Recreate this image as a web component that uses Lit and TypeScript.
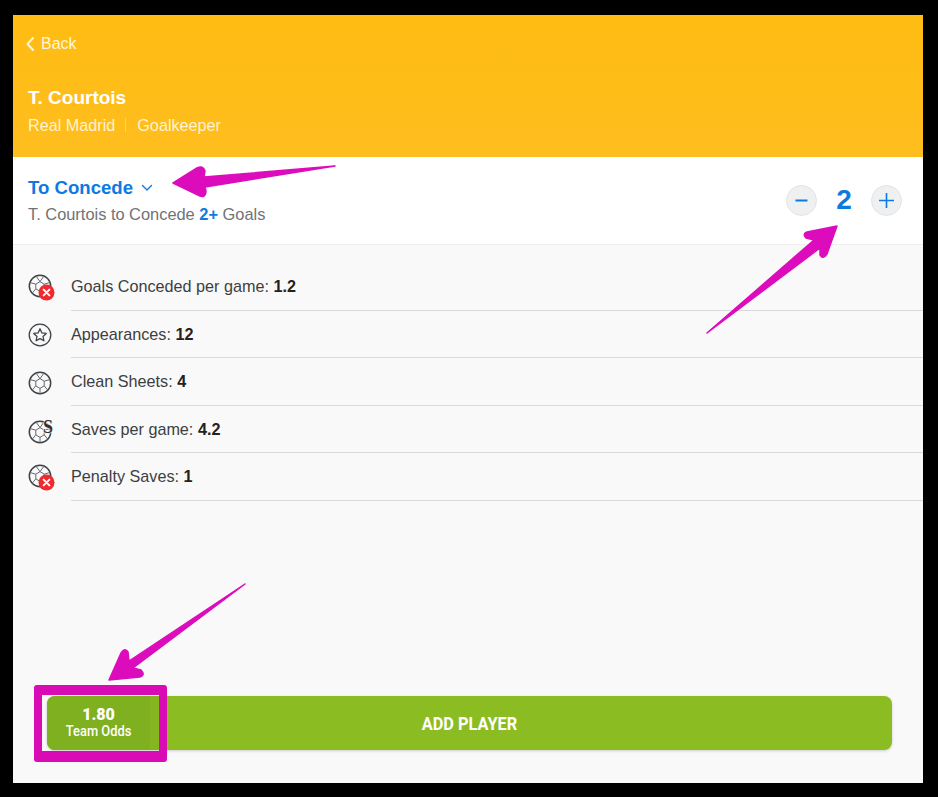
import { LitElement, html, css, svg } from "lit";
import { customElement } from "lit/decorators.js";

const ball = svg`
  <circle cx="12" cy="12" r="10.7" fill="none" stroke="#3f4347" stroke-width="1.5"/>
  <path d="M12 7.6l4.2 2.6v4.6L12 17.4l-4.2-2.6v-4.6zM12 7.6L8.4 2.6M12 7.6l3.6-5M16.2 10.2l5.4-1.6M16.2 14.8l3.6 4.4M12 17.4v5M7.8 14.8l-3.6 4.4M7.8 10.2L2.4 8.6" fill="none" stroke="#65696d" stroke-width="1"/>
`;
const cross = svg`
  <circle cx="18.5" cy="18.5" r="8" fill="#ee2a30"/>
  <path d="M15.6 15.6l5.8 5.8M21.4 15.6l-5.8 5.8" stroke="#fff" stroke-width="2" stroke-linecap="round"/>
`;
const icons: Record<string, unknown> = {
  conceded: html`<svg viewBox="0 0 27 27" width="27" height="27">${ball}${cross}</svg>`,
  star: html`<svg viewBox="0 0 24 24" width="24" height="24">
    <circle cx="12" cy="12" r="10.8" fill="none" stroke="#3f4347" stroke-width="1.3"/>
    <path d="M12 5.8l1.9 4.1 4.4.5-3.3 3 .9 4.4-3.9-2.2-3.9 2.2.9-4.4-3.3-3 4.4-.5z" fill="none" stroke="#3f4347" stroke-width="1.3" stroke-linejoin="round"/>
  </svg>`,
  ball: html`<svg viewBox="0 0 24 24" width="24" height="24">${ball}</svg>`,
  saves: html`<svg viewBox="0 0 27 27" width="27" height="27">
    <g transform="translate(0 3)">${ball}</g>
    <text x="15" y="15.5" class="dollar">S</text>
  </svg>`,
};

const rows = [
  { icon: "conceded", label: "Goals Conceded per game:", value: "1.2" },
  { icon: "star", label: "Appearances:", value: "12" },
  { icon: "ball", label: "Clean Sheets:", value: "4" },
  { icon: "saves", label: "Saves per game:", value: "4.2" },
  { icon: "conceded", label: "Penalty Saves:", value: "1" },
];

@customElement("app-root")
export class AppRoot extends LitElement {
  static styles = css`
    :host {
      display: block;
      width: 938px;
      height: 797px;
      background: #000;
      position: relative;
      overflow: hidden;
      font-family: "Liberation Sans", Arial, sans-serif;
      padding: 15px 15px 14px 13px;
      box-sizing: border-box;
    }
    .panel {
      height: 100%;
      background: #f9f9f9;
      display: flex;
      flex-direction: column;
    }
    .header {
      height: 142px;
      box-sizing: border-box;
      flex: none;
      background: linear-gradient(#ffbc12, #febe1e);
      color: #fff;
      padding: 19px 15px 0 15px;
      display: flex;
      flex-direction: column;
    }
    .back {
      display: flex;
      align-items: center;
      gap: 6px;
      font-size: 16px;
      line-height: 20px;
      color: #fff6dc;
      margin-left: -3px;
    }
    .name {
      margin-top: 32px;
      font-size: 19px;
      line-height: 24px;
      font-weight: 700;
    }
    .meta {
      margin-top: 5px;
      display: flex;
      align-items: center;
      font-size: 16.2px;
      line-height: 20px;
      color: #fff3d0;
    }
    .sep {
      width: 1px;
      height: 14px;
      margin: 0 11px 0 10px;
      background: #ffd264;
    }
    .market {
      height: 88px;
      box-sizing: border-box;
      flex: none;
      background: #fff;
      border-bottom: 1px solid #eeeeee;
      display: flex;
      align-items: center;
      justify-content: space-between;
      padding: 0 21px 0 15px;
    }
    .title {
      display: flex;
      align-items: center;
      gap: 8px;
      font-size: 18.6px;
      line-height: 22px;
      font-weight: 700;
      color: #0d7ae0;
    }
    .desc {
      margin-top: 5px;
      font-size: 16.4px;
      line-height: 20px;
      color: #6f7376;
    }
    .desc b {
      color: #0d7ae0;
    }
    .stepper {
      display: flex;
      align-items: center;
      margin-top: -1px;
    }
    .step {
      width: 31px;
      height: 31px;
      box-sizing: border-box;
      border-radius: 50%;
      background: #eff0f1;
      border: 1px solid #e2e3e4;
      display: flex;
      align-items: center;
      justify-content: center;
    }
    .count {
      width: 54px;
      text-align: center;
      font-size: 28px;
      line-height: 30px;
      font-weight: 700;
      color: #0d7ae0;
    }
    .list {
      padding-top: 18px;
    }
    .row {
      display: flex;
      align-items: center;
      height: 47.5px;
    }
    .icon {
      width: 58px;
      flex: none;
      box-sizing: border-box;
      padding-left: 15px;
      display: flex;
      align-items: center;
      height: 100%;
      padding-top: 2px;
    }
    .dollar {
      font-family: "Liberation Serif", serif;
      font-weight: 700;
      font-size: 18px;
      fill: #2e3134;
      stroke: #f9f9f9;
      stroke-width: 1.2px;
      paint-order: stroke;
    }
    .text {
      flex: 1;
      height: 100%;
      box-sizing: border-box;
      border-bottom: 1px solid #d9d9d9;
      padding-top: 0.5px;
      display: flex;
      align-items: center;
      gap: 4.5px;
      font-size: 16.2px;
      color: #3c3f42;
    }
    .text b {
      color: #222;
    }
    .footer {
      margin-top: auto;
      padding: 0 31px 33px 34px;
    }
    .cta {
      height: 54px;
      border-radius: 8px;
      background: #8bbc21;
      box-shadow: 0 1px 3px rgba(0, 0, 0, 0.18);
      display: flex;
      align-items: stretch;
      color: #fff;
      font-family: Roboto, sans-serif;
      font-weight: 700;
      overflow: hidden;
    }
    .odds {
      width: 103px;
      flex: none;
      background: #7fb020;
      border-right: 9px solid #85b61f;
      display: flex;
      flex-direction: column;
      align-items: center;
      gap: 2px;
      justify-content: center;
      box-sizing: content-box;
    }
    .odds-value {
      font-size: 16px;
      line-height: 15px;
      font-weight: 900;
    }
    .odds-label {
      font-size: 14px;
      line-height: 15px;
      font-weight: 500;
      transform: scaleX(0.92);
      white-space: nowrap;
    }
    .add {
      flex: 1;
      display: flex;
      align-items: center;
      justify-content: center;
      font-size: 19px;
      padding-right: 112px;
      box-sizing: border-box;
    }
    .add span {
      transform: scaleX(0.86);
      white-space: nowrap;
    }
    .frame {
      position: absolute;
      left: 34px;
      top: 685px;
      width: 133px;
      height: 77px;
      box-sizing: border-box;
      border-style: solid;
      border-color: #d90bb5;
      border-width: 10px 8px 11px 8px;
      border-radius: 3px;
      pointer-events: none;
    }
    .arrows {
      position: absolute;
      left: 0;
      top: 0;
      pointer-events: none;
    }
  `;

  render() {
    return html`
      <div class="panel">
        <header class="header">
          <div class="back">
            <svg width="10" height="16" viewBox="0 0 10 16">
              <path d="M8 2L2.5 8 8 14" fill="none" stroke="#fff6dc" stroke-width="2" stroke-linecap="round" stroke-linejoin="round"/>
            </svg>
            Back
          </div>
          <div class="name">T. Courtois</div>
          <div class="meta"><span>Real Madrid</span><i class="sep"></i><span>Goalkeeper</span></div>
        </header>
        <section class="market">
          <div>
            <div class="title">
              To Concede
              <svg width="12" height="8" viewBox="0 0 12 8">
                <path d="M1.5 1.5L6 6l4.5-4.5" fill="none" stroke="#0d7ae0" stroke-width="1.4" stroke-linecap="round" stroke-linejoin="round"/>
              </svg>
            </div>
            <div class="desc">T. Courtois to Concede <b>2+</b> Goals</div>
          </div>
          <div class="stepper">
            <div class="step">
              <svg width="13" height="13" viewBox="0 0 13 13"><path d="M0.5 6.5h12" stroke="#0d7ae0" stroke-width="2"/></svg>
            </div>
            <div class="count">2</div>
            <div class="step">
              <svg width="15" height="15" viewBox="0 0 15 15"><path d="M0 7.5h15M7.5 0v15" stroke="#0d7ae0" stroke-width="1.6"/></svg>
            </div>
          </div>
        </section>
        <section class="list">
          ${rows.map(
            (r) => html`<div class="row">
              <div class="icon">${icons[r.icon]}</div>
              <div class="text"><span>${r.label}</span><b>${r.value}</b></div>
            </div>`
          )}
        </section>
        <div class="footer">
          <div class="cta">
            <div class="odds">
              <div class="odds-value">1.80</div>
              <div class="odds-label">Team Odds</div>
            </div>
            <div class="add"><span>ADD PLAYER</span></div>
          </div>
        </div>
      </div>
      <div class="frame"></div>
      <svg class="arrows" width="938" height="797" viewBox="0 0 938 797">
        <g fill="#dc0cbc" stroke="#dc0cbc" stroke-width="1.5" stroke-linejoin="round">
          <path d="M335 166L204 177 205 171Q203 165 197 168L173 183 200 196Q206 198 206 191L205 187z"/>
          <path d="M707 333L814 240 806 238Q802 234 807 232L837 226 827 254Q823 260 820 255L820 248z"/>
          <path d="M245 584L133 668 141 670Q146 675 140 677L109 680 121 653Q125 647 128 652L129 661z"/>
        </g>
      </svg>
    `;
  }
}
